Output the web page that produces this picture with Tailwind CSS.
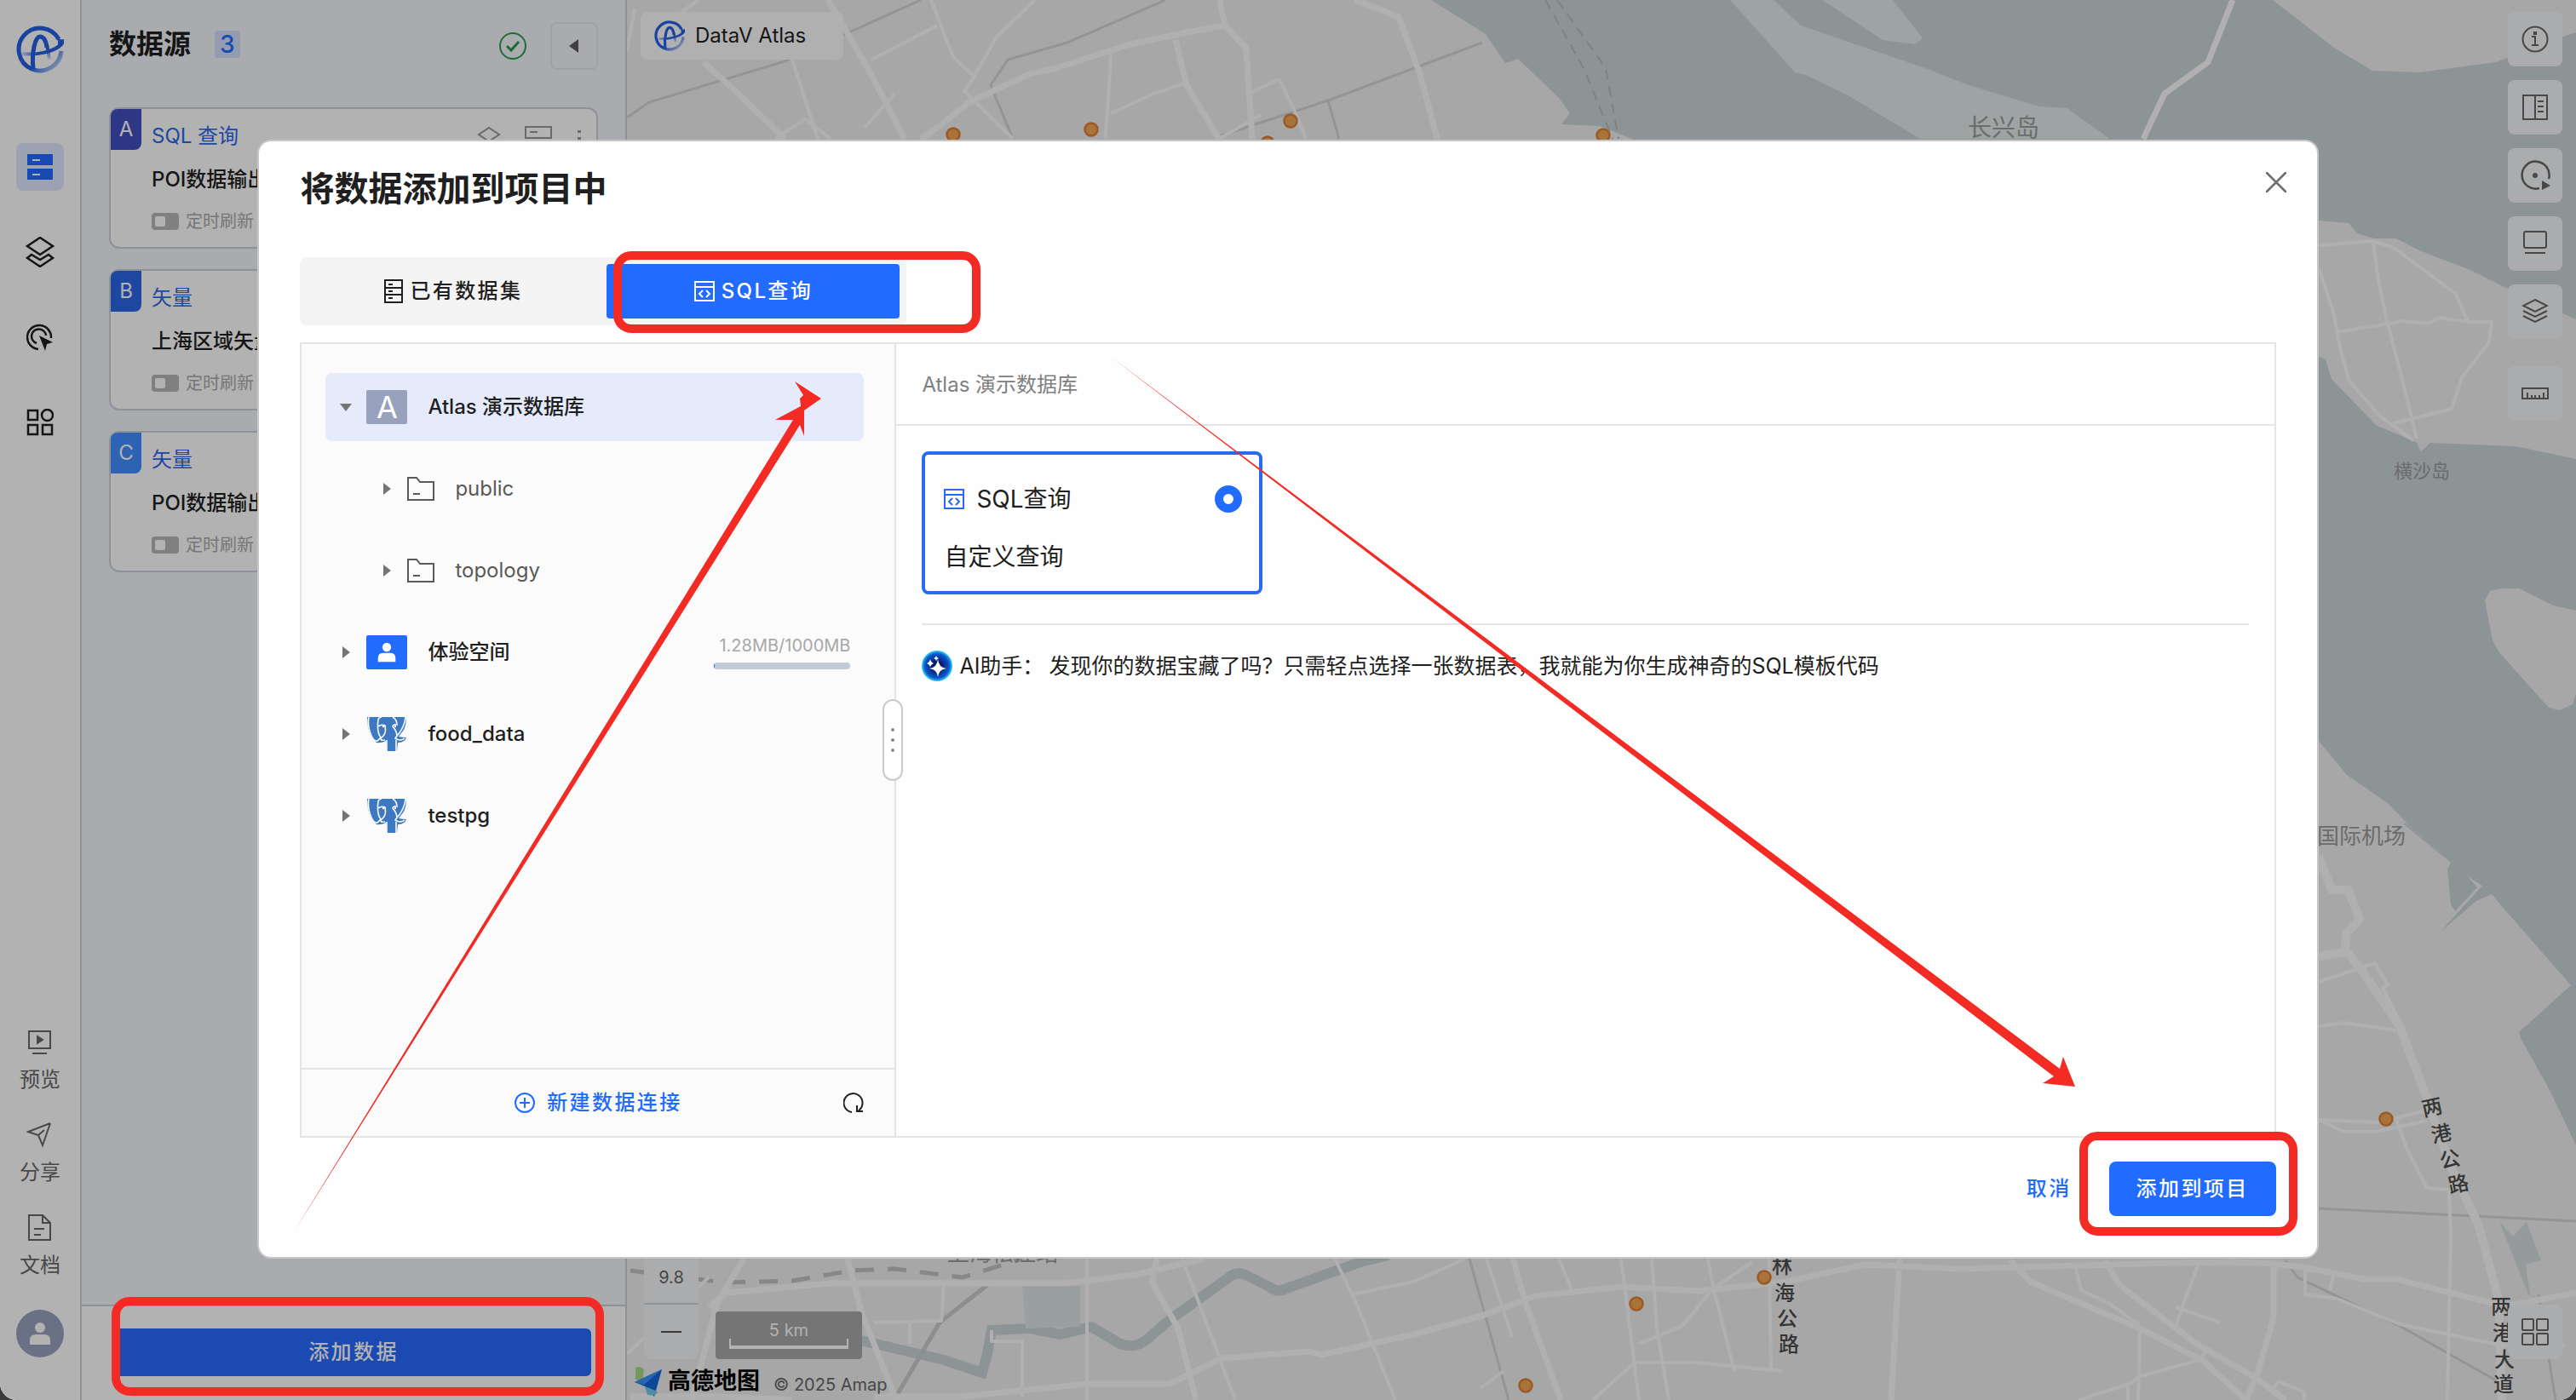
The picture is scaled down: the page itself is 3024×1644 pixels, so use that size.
<!DOCTYPE html>
<html lang="zh-CN">
<head>
    <meta charset="UTF-8">
    <title>DataV Atlas</title>
    <script src="https://cdn.jsdelivr.net/npm/@tailwindcss/browser@4"></script>
</head>
<body class="bg-[#3c3c3c] h-screen overflow-hidden font-['Inter','Noto_Sans_CJK_SC',sans-serif] text-2xl text-[#1f1f1f]">

    <!-- shared icons -->
    <svg class="absolute size-0" aria-hidden="true">
        <defs>
            <linearGradient id="ring" x1="0" y1="0" x2="1" y2="1">
                <stop offset="0.6" stop-color="#2460e6" />
                <stop offset="1" stop-color="#2460e6" stop-opacity="0.1" />
            </linearGradient>
            <linearGradient id="bar" x1="0" y1="0" x2="1" y2="0">
                <stop offset="0" stop-color="#2460e6" stop-opacity="0.2" />
                <stop offset="0.4" stop-color="#2460e6" />
            </linearGradient>
            <linearGradient id="leg" x1="0" y1="0" x2="0" y2="1">
                <stop offset="0.3" stop-color="#2460e6" />
                <stop offset="1" stop-color="#2460e6" stop-opacity="0.1" />
            </linearGradient>
        </defs>
        <symbol id="logo" viewBox="0 0 56 56">
            <path d="M50 16A25 25 0 1 0 53 30" fill="none" stroke="url(#ring)" stroke-width="5" />
            <path d="M20 51C18 32 22 13 28 13C33 13 35 18 36 26" fill="none" stroke="#2460e6" stroke-width="5" />
            <path d="M36 22L39 40" fill="none" stroke="url(#leg)" stroke-width="4" />
            <path d="M7 33C24 35 44 31 53 22" fill="none" stroke="url(#bar)" stroke-width="4" />
            <path d="M47 12C51 18 54 16 57 16C58 20 54 26 46 29C50 23 50 18 47 12Z" fill="#2460e6" />
        </symbol>
        <symbol id="code" viewBox="0 0 24 24">
            <path d="M1 1H23V23H1ZM1 7H23M10 11L6 15L10 19M14 11L18 15L14 19" fill="none" stroke="currentColor" stroke-width="2" />
        </symbol>
        <symbol id="user" viewBox="0 0 28 28">
            <circle cx="14" cy="7" r="6" fill="currentColor" />
            <path d="M2 27V22Q2 15 9 15H19Q26 15 26 22V27Z" fill="currentColor" />
        </symbol>
        <symbol id="caret" viewBox="0 0 16 16">
            <path d="M4 1L13 8L4 15Z" fill="#757575" />
        </symbol>
        <symbol id="folder" viewBox="0 0 32 28">
            <path d="M1 1H11L15 6H31V27H1ZM7 20H15" fill="none" stroke="#595959" stroke-width="2" />
        </symbol>
        <symbol id="postgres" viewBox="0 0 48 40">
            <path d="M1 0H46Q48 6 44 15L38 23Q43 24 47 24Q45 30 37 30L36 40H24L23 28Q17 31 12 30Q5 26 2 12Z" fill="#3d78c0" />
            <g fill="none" stroke="#fcfcfc" stroke-width="1.6">
                <path d="M3 0Q1 10 6 22Q9 29 13 28L17 24Q12 18 14 3Q15 0 18 0" />
                <path d="M14 11Q18 8 22 10Q24 20 18 24Q15 28 22 27" />
                <path d="M31 0Q36 3 36 9Q32 8 31 11Q36 17 36 22Q42 16 45 6L46 0" />
                <path d="M36 22L34 25Q40 29 45 25" />
                <path d="M24 27V40M35 27V40" />
            </g>
            <circle cx="20" cy="11" r="1.2" fill="#fcfcfc" />
            <circle cx="34" cy="11" r="1.2" fill="#fcfcfc" />
        </symbol>
    </svg>

    <div class="flex h-full rounded-b-[20px] overflow-hidden bg-white">
        <!-- navigation rail -->
        <nav class="flex flex-col items-center w-24 shrink-0 border-r-2 border-[#cbd1dc] bg-white pt-[30px] pb-[50px]">
            <a href="#" aria-label="DataV Atlas"><svg class="size-14"><use href="#logo" /></svg></a>
            <div class="flex flex-col gap-11 mt-[82px]">
                <button aria-label="数据源" class="flex items-center justify-center size-14 rounded-lg bg-[#e0e9ff]">
                    <svg class="size-8" viewBox="0 0 32 32"><path d="M1 1H31V14H1ZM1 18H31V31H1Z" fill="#216bff" /><path d="M7 8H16M7 25H16" stroke="#fff" stroke-width="2" /></svg>
                </button>
                <button aria-label="图层" class="flex items-center justify-center size-14">
                    <svg class="size-9" viewBox="0 0 36 36" fill="none" stroke="#1f1f1f" stroke-width="2.5"><path d="M18 1L33 11L18 21L3 11ZM8 21L3 25L18 35L33 25L28 21L18 27Z" /></svg>
                </button>
                <button aria-label="交互" class="flex items-center justify-center size-14">
                    <svg class="size-8" viewBox="0 0 32 32" fill="none" stroke="#1f1f1f" stroke-width="2.5"><path d="M14 30A14 14 0 1 1 29 17M12 23A8.5 8.5 0 1 1 23 14" /><path d="M15 14L31 22L24 24L22 32Z" fill="#1f1f1f" stroke="none" /></svg>
                </button>
                <button aria-label="组件" class="flex items-center justify-center size-14">
                    <svg class="size-8" viewBox="0 0 32 32" fill="none" stroke="#1f1f1f" stroke-width="2.5"><path d="M2 2H13V13H2ZM2 19H13V30H2ZM19 19H30V30H19Z" /><circle cx="24.5" cy="7.5" r="6.5" /></svg>
                </button>
            </div>
            <div class="flex flex-col gap-[33px] mt-auto text-[#686868]">
                <button class="flex flex-col items-center gap-3 leading-8">
                    <svg class="size-8" viewBox="0 0 32 32" fill="none" stroke="currentColor" stroke-width="2"><path d="M3 3H28V23H3ZM7 29H24" /><path d="M13 9L19 13L13 17Z" fill="currentColor" /></svg>
                    预览
                </button>
                <button class="flex flex-col items-center gap-3 leading-8">
                    <svg class="size-8" viewBox="0 0 32 32" fill="none" stroke="currentColor" stroke-width="2"><path d="M28 2L2 12L14 16L19 28L28 2M21 10L14 16" /></svg>
                    分享
                </button>
                <button class="flex flex-col items-center gap-3 leading-8">
                    <svg class="size-8" viewBox="0 0 32 32" fill="none" stroke="currentColor" stroke-width="2"><path d="M3 1H19L28 10V30H3ZM19 1V10H28M9 17H21M9 24H17" /></svg>
                    文档
                </button>
            </div>
            <button aria-label="账户" class="flex items-center justify-center size-14 mt-9 rounded-full bg-[#98a2bf] text-white">
                <svg class="size-7"><use href="#user" /></svg>
            </button>
        </nav>

        <!-- data source panel -->
        <aside class="flex flex-col w-[640px] shrink-0 border-r-2 border-[#cbd1dc] bg-[#f2f5f9]">
            <header class="flex items-center h-27 px-8">
                <h2 class="pb-1 text-[32px] leading-10 font-bold">数据源</h2>
                <span class="ml-7 mb-1 px-1.5 h-8 leading-8 rounded-sm bg-[#d3e0fb] text-[28px] font-medium text-[#216bff]">3</span>
                <svg class="ml-auto size-8" viewBox="0 0 32 32" fill="none" stroke="#2c9b4b" stroke-width="2"><circle cx="16" cy="16" r="15" /><path d="M9 16L14 21L23 11" stroke-width="3" /></svg>
                <button aria-label="收起" class="ml-7 flex items-center justify-center size-14 rounded-lg border-2 border-[#e4e7ec]">
                    <svg class="size-4" viewBox="0 0 16 16"><path d="M13 0V16L2 8Z" fill="#5c5c5c" /></svg>
                </button>
            </header>

            <div class="flex flex-col gap-6 px-8 pt-[18px]">
                <section class="flex h-[166px] border-2 border-[#cbd1dc] rounded-xl bg-white">
                    <b class="w-9 h-12 text-center leading-12 rounded-tl-lg rounded-br-lg bg-[#4250c0] text-white font-normal">A</b>
                    <div class="flex flex-col justify-between ml-3 py-4 grow">
                        <div class="flex items-center leading-8">
                            <a href="#" class="text-[#2c68e8]">SQL 查询</a>
                            <div class="flex items-center gap-7 ml-auto mr-4 text-[#999]">
                                <svg class="size-7" viewBox="0 0 28 28" fill="none" stroke="currentColor" stroke-width="2"><path d="M14 4L26 12L14 20L2 12Z" /></svg>
                                <svg class="size-8" viewBox="0 0 32 32" fill="none" stroke="currentColor" stroke-width="2"><path d="M1 5H31V18H1ZM6 11H15" /></svg>
                                <svg class="w-2 h-7" viewBox="0 0 8 28" fill="currentColor"><path d="M2 7H6V10H2ZM2 15H6V18H2Z" /></svg>
                            </div>
                        </div>
                        <h3 class="leading-8 font-medium">POI数据输出</h3>
                        <label class="flex items-center gap-2 text-xl text-[#aaa]">
                            <input type="checkbox" class="appearance-none w-8 h-5 rounded-sm bg-[#b8b8b8] before:block before:size-3 before:m-1 before:rounded-xs before:bg-white">定时刷新
                        </label>
                    </div>
                </section>
                <section class="flex h-[166px] border-2 border-[#cbd1dc] rounded-xl bg-white">
                    <b class="w-9 h-12 text-center leading-12 rounded-tl-lg rounded-br-lg bg-[#2b66e8] text-white font-normal">B</b>
                    <div class="flex flex-col justify-between ml-3 py-4">
                        <a href="#" class="leading-8 text-[#2c68e8]">矢量</a>
                        <h3 class="leading-8 font-medium">上海区域矢量</h3>
                        <label class="flex items-center gap-2 text-xl text-[#aaa]">
                            <input type="checkbox" class="appearance-none w-8 h-5 rounded-sm bg-[#b8b8b8] before:block before:size-3 before:m-1 before:rounded-xs before:bg-white">定时刷新
                        </label>
                    </div>
                </section>
                <section class="flex h-[166px] border-2 border-[#cbd1dc] rounded-xl bg-white">
                    <b class="w-9 h-12 text-center leading-12 rounded-tl-lg rounded-br-lg bg-[#428dff] text-white font-normal">C</b>
                    <div class="flex flex-col justify-between ml-3 py-4">
                        <a href="#" class="leading-8 text-[#2c68e8]">矢量</a>
                        <h3 class="leading-8 font-medium">POI数据输出</h3>
                        <label class="flex items-center gap-2 text-xl text-[#aaa]">
                            <input type="checkbox" class="appearance-none w-8 h-5 rounded-sm bg-[#b8b8b8] before:block before:size-3 before:m-1 before:rounded-xs before:bg-white">定时刷新
                        </label>
                    </div>
                </section>
            </div>

            <footer class="mt-auto px-10 pt-[26px] pb-7 border-t-2 border-[#cbd1dc] bg-white">
                <button class="w-full h-14 rounded-md bg-[#266aff] text-white font-medium tracking-widest">添加数据</button>
            </footer>
        </aside>

        <!-- map -->
        <main class="relative grow overflow-hidden bg-[#f0f0f0]">
            <svg class="absolute inset-0 size-full" viewBox="736 0 2288 1644" preserveAspectRatio="xMidYMid slice" fill="none">
                <!-- water -->
                <path fill="#c9d4d6" d="M1680 0L1744 40L1767 74L1782 69L1830 115L1843 133L1833 146L1878 148L1916 163L2722 870L2755 910L2803 943L2827 968L2898 1030L2914 1040L2865 1094L2907 1058L2925 1050L2935 1062L3018 1157L3024 1160V0Z" />
                <path fill="#c9d4d6" d="M3018 1157L2957 1212L2960 1221L2993 1280L3024 1345V1150ZM2873 1020L2879 1010L2908 1042L2882 1070L2877 1062Z" />
                <!-- islands -->
                <path fill="#e3ebeb" d="M2031 0L2107 85L2120 88L2171 113L2254 163H2477L2426 127L2394 125L2311 100L2260 80L2114 30L2082 0ZM2139 0L2210 47L2248 52L2257 45L2222 0Z" />
                <g fill="#f0f0f0">
                    <path d="M2668 0L2708 31L2740 56L2785 83L2840 85L2930 73L3008 43L3024 38V0Z" />
                    <path d="M2722 259L2757 262L2767 274L2787 280L2813 280L2840 294L2902 318L2944 339L3024 375V539L2953 524L2853 520L2842 530L2837 520L2815 510L2790 500L2737 445L2730 422L2722 419Z" />
                    <path d="M2917 705L2923 694L2937 691L2957 691L2997 711L3024 717V815L3020 827L3005 834L2992 831L2933 765L2926 752Z" />
                </g>
                <path fill="#d6dfe1" d="M2934 1435L2950 1452L2966 1435L2983 1480L2965 1485L2970 1520L2982 1526L2968 1520Z" />
                <!-- rivers and canals -->
                <path stroke="#c9d4d6" stroke-width="12" d="M1630 1474L1597 1482L1510 1513Q1500 1519 1490 1511L1462 1497Q1450 1492 1440 1502L1373 1550L1345 1574Q1332 1584 1315 1578L1281 1558L1245 1567L1210 1560L1164 1562L1159 1590L1153 1612L1108 1597L1036 1580L985 1568L950 1552" />
                <path fill="#dde5e7" d="M1200 1510H1268V1558L1204 1560Z" />
                <path stroke="#d2d6d8" stroke-width="3" d="M1368 0L1253 50L1183 70L1163 100L1189 163M736 138L762 120L921 72L1081 0M1740 50L1559 118L1431 160M1559 118L1572 163M1725 1478L1771 1644M2722 1419L2905 1428L3024 1434M2683 1480L2697 1500L2817 1557L2937 1625M2980 1520L3000 1644M2823 967L2900 1030" />
                <path stroke="#c9cccd" stroke-width="5" d="M1159 1509L1103 1553L1052 1640" />
                <path stroke="#c2c2c2" stroke-width="5" stroke-dasharray="22 16" d="M740 1492L850 1506L930 1504L1000 1492L1050 1490L1130 1500L1200 1478" />
                <path stroke="#b4bcbe" stroke-width="2" stroke-dasharray="12 8" d="M1814 0L1859 80L1893 163M1828 0L1885 80L1900 163" />
                <!-- minor roads -->
                <g stroke="#fcfcfc" stroke-width="4" stroke-linejoin="round">
                    <path d="M1093 0L1119 67L1144 90L1132 107L1189 163M1215 0L1170 43L1145 87M1304 63L1300 133L1297 163M1304 133L1355 110L1393 97M1502 93L1521 133L1533 163M1470 108L1502 93M1023 70L1100 30M736 60L745 10M800 14L820 0M870 113L921 163M930 70L960 163M1015 150L1050 110M910 163L945 140L975 163M1431 163L1480 135" />
                    <path d="M1388 1478L1450 1644M1567 1478L1592 1530L1638 1644M1720 1478L1660 1505L1587 1520M1903 1478L1924 1644M1939 1478L1945 1560L1959 1644M2077 1478L2079 1610M2005 1478L2012 1515L2036 1610M2057 1482L2011 1513L1975 1557L1924 1578M1919 1600L1990 1600L2092 1610M1276 1478V1644M1830 1478L1845 1515M1745 1478L1775 1570M1026 1553L1105 1551L1108 1508M1068 1551V1578M1870 1644L1919 1600M1164 1562V1575H1200V1640M736 1590L790 1540L832 1500M1738 1630L1765 1610" />
                    <path d="M2436 1485L2443 1515L2475 1530L2512 1556M2582 1480L2554 1557M2512 1560L2510 1644M2440 1644L2500 1625L2512 1616L2582 1597L2593 1582M2554 1535L2606 1553M2706 1488L2706 1520L2743 1525M2740 1495L2735 1515M2498 1625V1644M2669 1630L2675 1622L2705 1635V1644" />
                    <path d="M2722 1205L2752 1201L2813 1210M2722 1315L2789 1318L2845 1305M2722 1315L2752 1329L2789 1329L2849 1316M2813 1315L2826 1350L2849 1395L2875 1397L2877 1450L2873 1644M2706 1520L2743 1525L2817 1555L2937 1580L3011 1580M2722 1153L2788 1131L2803 1157L2797 1160L2817 1200" />
                    <path d="M2722 288L2786 283L2810 291L2883 345L2897 378M2786 283L2792 330L2803 380L2822 453L2837 515M2743 390L2822 377L2850 380L2863 373L2897 378L2925 378L2922 402L2890 443L2878 480L2810 497M2722 315L2740 370L2747 408L2757 446L2793 488L2833 517" />
                </g>
                <!-- main roads -->
                <g stroke="#fcfcfc" stroke-width="7" stroke-linejoin="round">
                    <path d="M1438 30L1393 38L1323 53L1240 80L1208 87L1138 120L1100 150L1081 163M1432 0L1438 30L1463 57L1470 163M1591 0L1642 20L1667 87L1687 163M972 0L1017 77L1062 163M826 73L870 113L921 163M1380 47L1393 100L1431 163M2621 0L2592 73L2541 110L2516 163" />
                    <path d="M832 1535L853 1518L975 1507H1250L1332 1497L1414 1478M1358 1478L1352 1505L1383 1560L1398 1620L1404 1644M995 1478L1011 1540L1052 1644M873 1478L842 1530L812 1644M1026 1640H1128L1276 1625H1373L1434 1595L1536 1587L1551 1591L1659 1567L1740 1545L1801 1522L1903 1511L1995 1516L2097 1505L2189 1485L2300 1490M1776 1478L1791 1530L1832 1644M2230 1478L2220 1644M740 1640L850 1640L930 1644" />
                    <path d="M2300 1490L2554 1483L2623 1482L2669 1484L2702 1488L2776 1502L2813 1502L2933 1532M2669 1484V1547L2651 1610L2637 1644M2360 1480L2383 1505L2512 1560L2586 1598L2637 1644M2471 1480L2489 1510L2577 1577L2646 1617L2683 1644M2946 1533L3024 1518" />
                    <path stroke-width="10" d="M2722 1005L2737 1045H2757L2770 1080L2755 1095L2753 1115L2773 1140L2817 1205L2849 1290L2877 1370L2909 1437L2933 1525L2937 1644M2722 1123L2753 1118" />
                </g>
                <!-- points of interest -->
                <g fill="#f3a654" stroke="#dd8035" stroke-width="2.5">
                    <circle cx="1119" cy="158" r="7.5" /><circle cx="1281" cy="152" r="7.5" /><circle cx="1515" cy="142" r="7.5" />
                    <circle cx="1488" cy="168" r="7.5" /><circle cx="1882" cy="159" r="7.5" /><circle cx="2071" cy="1500" r="7.5" />
                    <circle cx="1921" cy="1531" r="7.5" /><circle cx="1791" cy="1627" r="7.5" /><circle cx="2801" cy="1314" r="7.5" />
                </g>
                <g fill="#9b9b9b" font-size="26">
                    <text x="2310" y="160" font-size="28">长兴岛</text>
                    <text x="2810" y="561" font-size="22">横沙岛</text>
                    <text x="2720" y="991">国际机场</text>
                    <text x="1112" y="1481">上海松江站</text>
                </g>
                <g fill="#4d4d4d" font-size="24" font-weight="500" text-anchor="middle">
                    <text x="2855" y="1309" transform="rotate(-12 2855 1301)">两</text>
                    <text x="2866" y="1340" transform="rotate(-12 2866 1332)">港</text>
                    <text x="2876" y="1370" transform="rotate(-12 2876 1362)">公</text>
                    <text x="2886" y="1399" transform="rotate(-12 2886 1391)">路</text>
                    <text x="2936" y="1543">两</text>
                    <text x="2938" y="1574">港</text>
                    <text x="2940" y="1605">大</text>
                    <text x="2939" y="1634">道</text>
                    <text x="2092" y="1495">林</text>
                    <text x="2095" y="1527">海</text>
                    <text x="2098" y="1557">公</text>
                    <text x="2100" y="1587">路</text>
                </g>
            </svg>

            <div class="absolute left-4 top-3.5 flex items-center gap-3 h-14 pl-4 pr-11 rounded-lg bg-[#fcfcfd]">
                <svg class="size-9"><use href="#logo" /></svg>
                <span>DataV Atlas</span>
            </div>

            <div class="absolute right-4 top-3.5 flex flex-col gap-4 text-[#666]">
                <button aria-label="信息" class="flex items-center justify-center size-16 rounded-lg bg-[#f5f7fa]">
                    <svg class="size-8" viewBox="0 0 32 32" fill="none" stroke="currentColor" stroke-width="2"><circle cx="16" cy="16" r="14.5" /><path d="M12 13H16V23M12 23H20M15 8H17V10H15Z" /></svg>
                </button>
                <button aria-label="图例" class="flex items-center justify-center size-16 rounded-lg bg-[#f5f7fa]">
                    <svg class="size-8" viewBox="0 0 32 32" fill="none" stroke="currentColor" stroke-width="2"><path d="M2 2H30V30H2ZM16 2V30M19 9H26M19 15H26M19 21H26" /></svg>
                </button>
                <button aria-label="播放" class="flex items-center justify-center size-16 rounded-lg bg-[#f5f7fa]">
                    <svg class="size-9" viewBox="0 0 36 36" fill="none" stroke="currentColor" stroke-width="2.5"><path d="M23 33A16 16 0 1 1 34 22" /><circle cx="18" cy="18" r="3" fill="currentColor" stroke="none" /><path d="M26 24L36 30L26 35Z" fill="currentColor" stroke="none" /></svg>
                </button>
                <button aria-label="全屏" class="flex items-center justify-center size-16 rounded-lg bg-[#f5f7fa]">
                    <svg class="size-8" viewBox="0 0 32 32" fill="none" stroke="currentColor" stroke-width="2"><rect x="3" y="2" width="26" height="19" rx="2" /><path d="M4 27H28" /></svg>
                </button>
                <button aria-label="底图" class="flex items-center justify-center size-16 rounded-lg bg-[#f5f7fa]">
                    <svg class="size-8" viewBox="0 0 32 32" fill="none" stroke="currentColor" stroke-width="2"><path d="M16 2L30 9L16 16L2 9ZM2 15L16 22L30 15M2 21L16 28L30 21" /></svg>
                </button>
                <button aria-label="测量" class="flex items-center justify-center size-16 mt-4 rounded-lg bg-[#f5f7fa]">
                    <svg class="size-8" viewBox="0 0 32 32" fill="none" stroke="currentColor" stroke-width="2"><path d="M1 10H31V22H1ZM7 22V15M12 22V18M16 22V18M21 22V18M26 22V15" /></svg>
                </button>
            </div>

            <button aria-label="组件面板" class="absolute right-4 bottom-12 flex items-center justify-center size-16 rounded-lg bg-[#f5f7fa] text-[#666]">
                <svg class="size-8" viewBox="0 0 32 32" fill="none" stroke="currentColor" stroke-width="2"><rect x="1" y="1" width="13" height="13" rx="1" /><rect x="18" y="1" width="13" height="13" rx="1" /><rect x="1" y="18" width="13" height="13" rx="1" /><rect x="18" y="18" width="13" height="13" rx="1" /></svg>
            </button>

            <div class="absolute left-5 bottom-12 flex flex-col w-16 rounded-lg bg-[#f5f7fa] text-xl text-[#666]">
                <button class="h-16">+</button>
                <span class="h-16 leading-16 text-center border-b-2 border-[#cfd3da]">9.8</span>
                <button aria-label="缩小" class="flex items-center justify-center h-16"><svg class="w-6 h-2" viewBox="0 0 24 8"><path d="M0 4H24" stroke="#555" stroke-width="2" /></svg></button>
            </div>

            <div class="absolute left-[104px] bottom-12 flex flex-col justify-between w-43 h-14 px-4 pt-2 pb-3 rounded-sm bg-[#a8a8a8] text-xl leading-7 text-white text-center">
                5 km
                <span class="h-3 -mt-1 border-x-2 border-b-4 border-white"></span>
            </div>

            <div class="absolute left-2 bottom-1 flex items-center gap-1">
                <svg class="w-9 h-9" viewBox="0 0 36 36"><path d="M2 2Q8 -1 12 5L10 18L2 16Z" fill="#a5dc8c" /><path d="M33 4L1 19L13 24L24 36Z" fill="#1266dd" /><path d="M33 4L1 19L12 22Z" fill="#3b93f5" /><path d="M13 24L16 34Q26 36 28 30Z" fill="#72cbe8" /></svg>
                <span class="text-[27px] leading-9 font-bold text-black">高德地图</span>
                <span class="ml-3 pt-2 text-xl text-[#666]">© 2025 Amap</span>
            </div>
        </main>
    </div>

    <!-- add data dialog -->
    <div class="fixed inset-0 flex items-center justify-center pb-0.5 rounded-b-[20px] bg-black/30">
        <div role="dialog" aria-labelledby="dialog-title" class="flex flex-col w-4/5 h-4/5 px-12 pt-7 pb-12 rounded-2xl border-2 border-[#c6c6c6] bg-[#fefefe]">
            <header class="flex items-center justify-between h-14">
                <h1 id="dialog-title" class="text-[40px] leading-14 font-bold">将数据添加到项目中</h1>
                <button aria-label="关闭" class="-mr-3 mb-4"><svg class="size-6" viewBox="0 0 24 24"><path d="M1 1L23 23M23 1L1 23" stroke="#6e6e6e" stroke-width="2.5" stroke-linecap="round" /></svg></button>
            </header>

            <div class="flex self-start gap-2 mt-[52px] p-2 rounded-lg bg-[#f4f4f4]">
                <button class="flex items-center justify-center gap-2 w-[344px] h-16 font-medium tracking-widest">
                    <svg class="w-[22px] h-7" viewBox="0 0 22 28" fill="none" stroke="currentColor" stroke-width="2"><path d="M1 1H21V27H1ZM1 10H21M1 18H21M5 6H10M5 14H10M5 22H10" /></svg>
                    已有数据集
                </button>
                <button class="flex items-center justify-center gap-2 w-[344px] h-16 rounded-sm bg-[#216bff] text-white font-medium tracking-widest">
                    <svg class="size-6"><use href="#code" /></svg>
                    SQL查询
                </button>
            </div>

            <div class="flex grow mt-5 border-2 border-[#e3e4e5]">
                <div class="relative flex flex-col w-[698px] border-r-2 border-[#e3e4e5] bg-[#fbfbfb]">
                    <ul class="flex flex-col gap-4 pt-[34px] pl-7 pr-9">
                        <li class="flex items-center gap-4 h-20 pl-4 rounded-lg bg-[#e6ebfc]">
                            <svg class="size-4 rotate-90"><use href="#caret" /></svg>
                            <span class="w-12 h-10 mr-2 rounded-xs bg-[#98a2bd] text-white text-[36px] leading-10 text-center">A</span>
                            <span class="font-medium">Atlas 演示数据库</span>
                        </li>
                        <li class="flex items-center gap-4 h-20 pl-16 text-[#595959]">
                            <svg class="size-4"><use href="#caret" /></svg>
                            <svg class="w-8 h-7 mr-2"><use href="#folder" /></svg>
                            <span>public</span>
                        </li>
                        <li class="flex items-center gap-4 h-20 pl-16 text-[#595959]">
                            <svg class="size-4"><use href="#caret" /></svg>
                            <svg class="w-8 h-7 mr-2"><use href="#folder" /></svg>
                            <span>topology</span>
                        </li>
                        <li class="flex items-center gap-4 h-20 pl-4 pr-4">
                            <svg class="size-4"><use href="#caret" /></svg>
                            <span class="flex items-center justify-center w-12 h-10 mr-2 rounded-xs bg-[#216bff] text-white"><svg class="size-6"><use href="#user" /></svg></span>
                            <span class="font-medium">体验空间</span>
                            <span class="flex flex-col items-end w-40 ml-auto pb-1 text-xl leading-8 text-[#a8a8a8] whitespace-nowrap">
                                1.28MB/1000MB
                                <span class="w-40 h-2 mt-1 rounded-full bg-[#c3cad8] overflow-hidden"><span class="block w-px h-2 bg-[#216bff]"></span></span>
                            </span>
                        </li>
                        <li class="flex items-center gap-4 h-20 pl-4">
                            <svg class="size-4"><use href="#caret" /></svg>
                            <svg class="w-12 h-10 mr-2"><use href="#postgres" /></svg>
                            <span class="font-medium">food_data</span>
                        </li>
                        <li class="flex items-center gap-4 h-20 pl-4">
                            <svg class="size-4"><use href="#caret" /></svg>
                            <svg class="w-12 h-10 mr-2"><use href="#postgres" /></svg>
                            <span class="font-medium">testpg</span>
                        </li>
                    </ul>
                    <div class="grid grid-cols-[1fr_auto_1fr] items-center h-20 mt-auto border-t-2 border-[#e3e4e5]">
                        <button class="col-start-2 flex items-center gap-3.5 font-medium tracking-widest text-[#216bff]">
                            <svg class="size-6" viewBox="0 0 24 24" fill="none" stroke="currentColor" stroke-width="2"><circle cx="12" cy="12" r="11" /><path d="M6 12H18M12 6V18" /></svg>
                            新建数据连接
                        </button>
                        <button aria-label="刷新" class="justify-self-end mr-9"><svg class="size-6" viewBox="0 0 24 24" fill="none" stroke="#1f1f1f" stroke-width="2"><path d="M10 23A11 11 0 1 1 18 21M16 15V22H23" /></svg></button>
                    </div>
                    <!-- resize handle -->
                    <div class="absolute -right-2.5 top-1/2 -translate-y-1/2 flex flex-col items-center justify-center gap-2 w-6 h-24 rounded-full border-2 border-[#cacaca] bg-white">
                        <i class="size-1 rounded-full bg-[#888]"></i>
                        <i class="size-1 rounded-full bg-[#888]"></i>
                        <i class="size-1 rounded-full bg-[#888]"></i>
                    </div>
                </div>

                <div class="grow">
                    <div class="h-24 leading-24 px-[30px] border-b-2 border-[#e3e4e5] text-[#808080]">Atlas 演示数据库</div>
                    <div class="px-[30px] pt-[30px]">
                        <label class="flex flex-col gap-7 w-[400px] h-[168px] px-[22px] pt-8 rounded-lg border-4 border-[#276bf0] text-[28px] leading-10">
                            <span class="flex items-center">
                                <svg class="size-6 mr-3.5 text-[#276bf0]"><use href="#code" /></svg>
                                SQL查询
                                <input type="radio" name="mode" checked class="appearance-none ml-auto -mr-0.5 size-8 rounded-full border-[10px] border-[#216bff] bg-white">
                            </span>
                            <span>自定义查询</span>
                        </label>
                        <div class="flex items-center mt-[34px] pt-7 border-t-2 border-[#e3e4e5] text-[25px] leading-10">
                            <svg class="size-9 mr-2" viewBox="0 0 36 36">
                                <defs><radialGradient id="ai"><stop offset="0.3" stop-color="#0a1a6b" /><stop offset="0.8" stop-color="#0b58cf" /><stop offset="1" stop-color="#2fd2f5" /></radialGradient></defs>
                                <circle cx="18" cy="18" r="18" fill="url(#ai)" />
                                <path d="M19 10Q20 20 29 21Q20 22 19 31Q18 22 9 21Q18 20 19 10ZM10 10Q11 14 14 15Q11 16 10 19Q9 16 6 15Q9 14 10 10ZM17 6L18 8L20 9L18 10L17 12L16 10L14 9L16 8Z" fill="#fff" />
                            </svg>
                            <span>AI助手：</span>
                            <span class="ml-1.5">发现你的数据宝藏了吗？只需轻点选择一张数据表，我就能为你生成神奇的SQL模板代码</span>
                        </div>
                    </div>
                </div>
            </div>

            <footer class="flex items-center justify-end gap-11 mt-7">
                <button class="font-medium tracking-widest text-[#216bff]">取消</button>
                <button class="h-16 px-8 rounded-lg bg-[#216bff] text-white font-medium tracking-widest">添加到项目</button>
            </footer>
        </div>
    </div>

    <!-- tutorial marks -->
    <svg class="fixed inset-0 size-full pointer-events-none" viewBox="0 0 3024 1644" preserveAspectRatio="none">
        <g fill="none" stroke="#f32b24" stroke-width="10">
            <rect x="725" y="300" width="421" height="86" rx="16" />
            <rect x="136" y="1528" width="568" height="106" rx="16" />
            <rect x="2446" y="1334" width="246" height="112" rx="16" />
        </g>
        <g fill="#f32b24">
            <path d="M346 1445L931 493L910 493L940 477L939 468L943 464L933 448L964 468L944 482L944 512L939 499Z" />
            <path d="M1304 419L2418 1255L2422 1241L2436 1276L2398 1272L2411 1264Z" />
        </g>
    </svg>
</body>
</html>
